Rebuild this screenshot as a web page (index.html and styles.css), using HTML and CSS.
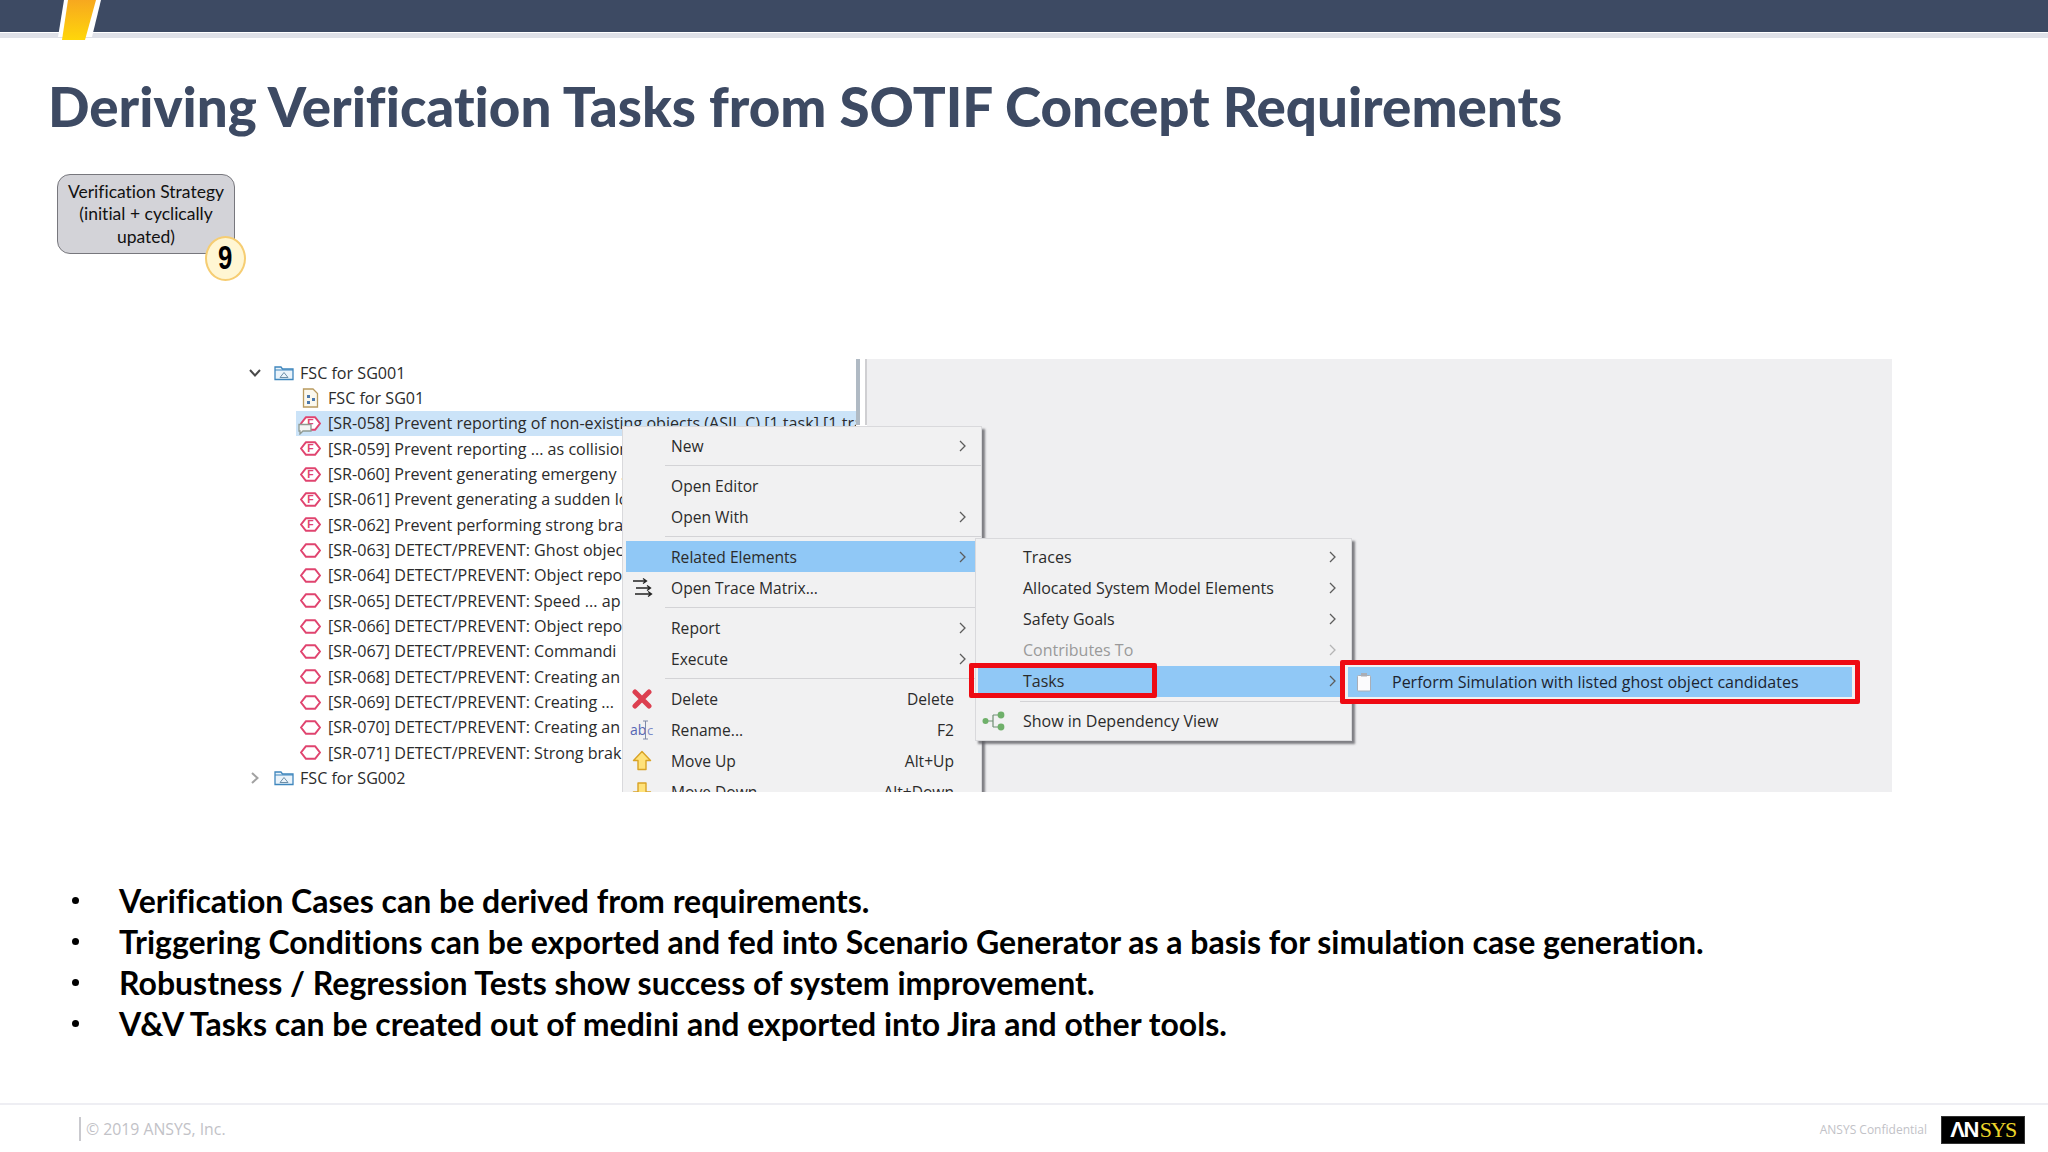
FILE: index.html
```html
<!DOCTYPE html>
<html lang="en">
<head>
<meta charset="utf-8">
<title>Deriving Verification Tasks from SOTIF Concept Requirements</title>
<link rel="stylesheet" href="styles.css">
</head>
<body>
<svg class="defs" width="0" height="0" aria-hidden="true">
  <symbol id="hex" viewBox="0 0 21 15"><path d="M1 7.5 6 1.2H15L20 7.5 15 13.8H6Z" fill="#fff" stroke="#e0446f" stroke-width="2" stroke-linejoin="round"/></symbol>
  <symbol id="hexf" viewBox="0 0 21 15"><path d="M1 7.5 6 1.2H15L20 7.5 15 13.8H6Z" fill="#fff" stroke="#e0446f" stroke-width="2" stroke-linejoin="round"/><text x="10.5" y="11.300" font-size="10.500" font-weight="700" text-anchor="middle" fill="#e0446f" font-family="Liberation Sans">F</text></symbol>
  <symbol id="folder" viewBox="0 0 20 16"><path d="M1 14.5V2H7L8.500 4H19V14.500Z" fill="#eaf3fa" stroke="#3f86bd" stroke-width="1.300"/><path d="M1 5H19" stroke="#3f86bd" stroke-width="1"/><path d="M6 12.500 10 7.500 14 12.500Z" fill="none" stroke="#6d8fa8" stroke-width="1"/></symbol>
  <symbol id="chev" viewBox="0 0 7 12"><path d="M1 1 6 6 1 11" fill="none" stroke="#5c5c5c" stroke-width="1.300"/></symbol>
  <symbol id="clip" viewBox="0 0 16 20"><rect x="1.500" y="3.500" width="13" height="15.500" rx="1" fill="#fbfbfd" stroke="#a9aeb7"/><rect x="5" y="1" width="6" height="3.500" fill="#a9adb5"/></symbol>
</svg>
<div class="slide">
  <header class="topbar">
    <svg class="stripe" width="110" height="42" viewBox="0 0 110 42"><path d="M64 0H101L92 37H58Z" fill="#fff"/><defs><linearGradient id="yel" x1="0" y1="0" x2="0" y2="1"><stop offset="0" stop-color="#f7a81f"/><stop offset="1" stop-color="#ffd60a"/></linearGradient></defs><path d="M68 0H96L85 40H62Z" fill="url(#yel)"/></svg>
  </header>
  <h1 class="title">Deriving Verification Tasks from SOTIF Concept Requirements</h1>
  <div class="callout">
    <span>Verification Strategy<br>(initial + cyclically<br>upated)</span>
    <b class="badge"><i>9</i></b>
  </div>
  <section class="shot">
    <div class="tree">
      <div class="row lvl0"><svg class="twist" width="14" height="10" viewBox="0 0 14 10"><path d="M2 2 7 7.500 12 2" fill="none" stroke="#4a4a4a" stroke-width="2"/></svg><svg class="ico-f" width="20" height="16"><use href="#folder"/></svg><span>FSC for SG001</span></div>
      <div class="row"><svg class="ico-r" width="17" height="20" viewBox="0 0 17 20"><path d="M1.500 1H11L15.500 5.500V19H1.500Z" fill="#fbf8ee" stroke="#b99a5f" stroke-width="1.300"/><rect x="5" y="7" width="3" height="3" fill="#4b78ad"/><rect x="10" y="10" width="3" height="3" fill="#4b78ad"/><rect x="5" y="13" width="3" height="3" fill="#4b78ad"/></svg><span>FSC for SG01</span></div>
      <div class="row sel"><svg class="ico-r" width="21" height="15"><use href="#hexf"/></svg><svg class="bubble" width="14" height="12" viewBox="0 0 14 12"><path d="M1 1.500H13V8H5L2 11V8H1Z" fill="#f4f4f4" stroke="#8f9a92" stroke-width="1.300"/></svg><span>[SR-058] Prevent reporting of non-existing objects (ASIL C) [1 task] [1 trace]</span></div>
      <div class="row"><svg class="ico-r" width="21" height="15"><use href="#hexf"/></svg><span>[SR-059] Prevent reporting ... as collision</span></div>
      <div class="row"><svg class="ico-r" width="21" height="15"><use href="#hexf"/></svg><span>[SR-060] Prevent generating emergeny ...</span></div>
      <div class="row"><svg class="ico-r" width="21" height="15"><use href="#hexf"/></svg><span>[SR-061] Prevent generating a sudden lo</span></div>
      <div class="row"><svg class="ico-r" width="21" height="15"><use href="#hexf"/></svg><span>[SR-062] Prevent performing strong brak</span></div>
      <div class="row"><svg class="ico-r" width="21" height="15"><use href="#hex"/></svg><span>[SR-063] DETECT/PREVENT: Ghost object</span></div>
      <div class="row"><svg class="ico-r" width="21" height="15"><use href="#hex"/></svg><span>[SR-064] DETECT/PREVENT: Object repo</span></div>
      <div class="row"><svg class="ico-r" width="21" height="15"><use href="#hex"/></svg><span>[SR-065] DETECT/PREVENT: Speed ... ap</span></div>
      <div class="row"><svg class="ico-r" width="21" height="15"><use href="#hex"/></svg><span>[SR-066] DETECT/PREVENT: Object repo</span></div>
      <div class="row"><svg class="ico-r" width="21" height="15"><use href="#hex"/></svg><span>[SR-067] DETECT/PREVENT: Commandi</span></div>
      <div class="row"><svg class="ico-r" width="21" height="15"><use href="#hex"/></svg><span>[SR-068] DETECT/PREVENT: Creating an</span></div>
      <div class="row"><svg class="ico-r" width="21" height="15"><use href="#hex"/></svg><span>[SR-069] DETECT/PREVENT: Creating ...</span></div>
      <div class="row"><svg class="ico-r" width="21" height="15"><use href="#hex"/></svg><span>[SR-070] DETECT/PREVENT: Creating an</span></div>
      <div class="row"><svg class="ico-r" width="21" height="15"><use href="#hex"/></svg><span>[SR-071] DETECT/PREVENT: Strong brak</span></div>
      <div class="row lvl0"><svg class="twist" width="14" height="14" viewBox="0 0 14 14"><path d="M4 2 9.500 7 4 12" fill="none" stroke="#a2a2a2" stroke-width="2"/></svg><svg class="ico-f" width="20" height="16"><use href="#folder"/></svg><span>FSC for SG002</span></div>
    </div>
    <div class="sash"></div>
    <div class="backdrop"></div>

    <div class="menu menu-main">
      <div class="item"><span class="cell"></span><span class="label">New</span><span class="arrow"><svg width="7" height="12"><use href="#chev"/></svg></span></div>
      <div class="sep"></div>
      <div class="item"><span class="cell"></span><span class="label">Open Editor</span><span class="arrow"></span></div>
      <div class="item"><span class="cell"></span><span class="label">Open With</span><span class="arrow"><svg width="7" height="12"><use href="#chev"/></svg></span></div>
      <div class="sep"></div>
      <div class="item hot"><span class="cell"></span><span class="label">Related Elements</span><span class="arrow"><svg width="7" height="12"><use href="#chev"/></svg></span></div>
      <div class="item"><span class="cell"><svg width="22" height="22" viewBox="0 0 22 22"><path d="M2 4H15M12 1.500 15.500 4 12 6.500M5 11H19M16 8.500 19.500 11 16 13.500M4 17H20M17 14.500 20.500 17 17 19.500" fill="none" stroke="#222" stroke-width="1.300"/></svg></span><span class="label">Open Trace Matrix...</span><span class="arrow"></span></div>
      <div class="sep"></div>
      <div class="item"><span class="cell"></span><span class="label">Report</span><span class="arrow"><svg width="7" height="12"><use href="#chev"/></svg></span></div>
      <div class="item"><span class="cell"></span><span class="label">Execute</span><span class="arrow"><svg width="7" height="12"><use href="#chev"/></svg></span></div>
      <div class="sep"></div>
      <div class="item"><span class="cell"><svg width="20" height="20" viewBox="0 0 20 20"><path d="M3 3 17 17M17 3 3 17" stroke="#dc3f50" stroke-width="5" stroke-linecap="round"/></svg></span><span class="label">Delete</span><span class="key">Delete</span><span class="arrow"></span></div>
      <div class="item"><span class="cell"><svg width="24" height="22" viewBox="0 0 24 22"><text x="0" y="16" font-size="14" fill="#5566b4" font-family="Open Sans">ab</text><text x="17" y="16" font-size="13" fill="#7d8cc8" font-family="Open Sans">c</text><path d="M13 2H18M15.500 2V20M13 20H18" fill="none" stroke="#7f8aa8" stroke-width="1"/></svg></span><span class="label">Rename...</span><span class="key">F2</span><span class="arrow"></span></div>
      <div class="item"><span class="cell"><svg width="20" height="21" viewBox="0 0 20 21"><path d="M10 1.500 18.500 10.500H14V19.500H6V10.500H1.500Z" fill="#ffe27a" stroke="#d9a326" stroke-width="1.400" stroke-linejoin="round"/></svg></span><span class="label">Move Up</span><span class="key">Alt+Up</span><span class="arrow"></span></div>
      <div class="item"><span class="cell"><svg width="20" height="21" viewBox="0 0 20 21"><path d="M6 2H14V11H18.500L10 20 1.500 11H6Z" fill="#ffe27a" stroke="#d9a326" stroke-width="1.400" stroke-linejoin="round"/></svg></span><span class="label">Move Down</span><span class="key">Alt+Down</span><span class="arrow"></span></div>
    </div>

    <div class="menu menu-sub">
      <div class="item"><span class="label">Traces</span><span class="arrow"><svg width="7" height="12"><use href="#chev"/></svg></span></div>
      <div class="item"><span class="label">Allocated System Model Elements</span><span class="arrow"><svg width="7" height="12"><use href="#chev"/></svg></span></div>
      <div class="item"><span class="label">Safety Goals</span><span class="arrow"><svg width="7" height="12"><use href="#chev"/></svg></span></div>
      <div class="item off"><span class="label">Contributes To</span><span class="arrow"><svg width="7" height="12" class="dim"><use href="#chev"/></svg></span></div>
      <div class="item hot"><span class="label">Tasks</span><span class="arrow"><svg width="7" height="12"><use href="#chev"/></svg></span></div>
      <div class="sep sep-sub"></div>
      <div class="item dep"><svg class="dep-ico" width="24" height="20" viewBox="0 0 24 20"><path d="M4 10H11M11 4V16M11 4H18M11 16H18" fill="none" stroke="#6f8f73" stroke-width="1.200"/><circle cx="3.500" cy="10" r="3" fill="#6fb06a"/><circle cx="19" cy="4" r="3.400" fill="#6fb06a"/><circle cx="19" cy="16" r="3.400" fill="#6fb06a"/></svg><span class="label">Show in Dependency View</span></div>
    </div>

    <div class="mark mark-tasks"></div>

    <div class="menu-task">
      <div class="task-row"><svg width="16" height="20"><use href="#clip"/></svg><span>Perform Simulation with listed ghost object candidates</span></div>
    </div>
  </section>

  <ul class="points">
    <li>Verification Cases can be derived from requirements.</li>
    <li>Triggering Conditions can be exported and fed into Scenario Generator as a basis for simulation case generation.</li>
    <li>Robustness / Regression Tests show success of system improvement.</li>
    <li>V&amp;V Tasks can be created out of medini and exported into Jira and other tools.</li>
  </ul>

  <footer class="foot">
    <span class="copy">© 2019 ANSYS, Inc.</span>
    <span class="conf">ANSYS Confidential</span>
    <span class="logo"><b>ΛN</b><em>SYS</em></span>
  </footer>
</div>
</body>
</html>
```
FILE: styles.css
```css
* { box-sizing: border-box; }
html, body { margin: 0; padding: 0; background: #fff; }
.defs { position: absolute; }
.slide {
  width: 2048px; height: 1152px; overflow: hidden; position: relative;
  display: flex; flex-direction: column; background: #fff;
  font-family: Lato, "Liberation Sans", sans-serif; font-variant-ligatures: none;
}
.topbar {
  height: 38px; flex: none; position: relative;
  background: #3d4a63; border-bottom: 5px solid #dfe1e8;
  box-shadow: inset 0 -1px 0 #fff;
}
.stripe { position: absolute; left: 0; top: 0; }
.title {
  margin: 38px 0 0 48px; font-size: 54.700px; line-height: 60px; font-weight: 900;
  color: #3d4a63; white-space: nowrap;
}
.callout {
  position: relative; flex: none; width: 178px; height: 80px; margin: 38px 0 0 57px; padding-top: 1px;
  background: #d3d3d8; border: 1.500px solid #77777d; border-radius: 13px;
  display: flex; align-items: center; justify-content: center; text-align: center;
  font-size: 17.500px; line-height: 22.500px; color: #111;
}
.badge {
  position: absolute; right: -12px; bottom: -28px; width: 41px; height: 45px;
  border-radius: 50%; background: #fff6d3; border: 2px solid #f6cd72;
  display: flex; align-items: center; justify-content: center;
  font-family: "Liberation Sans", sans-serif; font-size: 33px; font-weight: 700; color: #000;
}
.badge i { font-style: normal; display: block; transform: scaleX(.78); }
.shot {
  position: relative; flex: none; height: 433px; width: 1652px; margin: 105px 0 0 240px;
  overflow: hidden; display: flex; background: #fff;
}
.tree { width: 616px; flex: none; overflow: hidden; padding-top: 1px; font-family: "Open Sans", sans-serif; font-size: 16.100px; color: #2b2b2b; }
.row {
  height: 25.350px; display: flex; align-items: center; white-space: nowrap; position: relative;
  padding-left: 60px; width: 100%;
}
.row.lvl0 { padding-left: 8px; }
.row.sel { background: #cbe3f8; margin-left: 56px; padding-left: 4px; width: 560px; }
.row span { line-height: 1; }
.twist { margin-right: 12px; flex: none; }
.ico-f { margin-right: 6px; flex: none; }
.ico-r { margin-right: 7px; flex: none; }
.row:nth-child(2) .ico-r { margin-left: 2px; margin-right: 9px; }
.bubble { position: absolute; left: 2px; top: 12px; }
.sash { width: 11px; flex: none; background: #fff; border-left: 4px solid #b0bac4; border-right: 2px solid #cfcfd2; height: 66px; }
.backdrop { flex: 1; background: #efeff1; }
.menu {
  position: absolute; background: #f1f1f2; border: 1px solid #d9d9dc;
  font-family: "Open Sans", sans-serif; font-size: 16px; color: #2b2b2b;
  box-shadow: 3px 3px 2px rgba(90,90,95,.75);
}
.menu-main { left: 382px; top: 67px; width: 360px; height: 420px; padding: 3px 0 0 3px; font-size: 15.600px; }
.menu-sub { left: 735px; top: 179px; width: 377px; height: 203px; padding: 2.500px 2px 0 2px; }
.item { height: 31px; display: flex; align-items: center; white-space: nowrap; }
.cell { width: 45px; flex: none; display: flex; justify-content: center; padding-right: 14px; }
.label { flex: 1; }
.key { margin-right: 0; }
.arrow { width: 27px; flex: none; display: flex; padding-left: 5px; align-items: center; }
.hot { background: #90c8f6; }
.off { color: #9a9a9a; }
.dim { opacity: .4; }
.sep { height: 9px; margin-left: 39px; display: flex; align-items: center; }
.sep::before { content: ""; flex: 1; height: 1px; background: #d3d3d6; }
.menu-sub .item { padding-left: 45px; }
.menu-sub .arrow { width: 20px; padding-left: 0; }
.sep-sub { margin-left: 42px; }
.dep { position: relative; }
.dep-ico { position: absolute; left: 4px; top: 5px; }
.mark {
  position: absolute; border: 5px solid #ee0a13; border-radius: 2px;
}
.mark-tasks { left: 729px; top: 304px; width: 188px; height: 35px; }
.menu-task {
  position: absolute; left: 1100px; top: 301px; width: 520px; height: 44px;
  border: 5px solid #ee0a13; border-radius: 2px; background: #f1f1f2; padding: 2px 3px;
  font-family: "Open Sans", sans-serif; font-size: 16px; color: #1c2430;
}
.task-row {
  height: 30px; background: #90c8f6; display: flex; align-items: center; padding-left: 8px; white-space: nowrap;
}
.task-row svg { margin-right: 20px; flex: none; }
.points {
  list-style: none; margin: 88px 0 0; padding: 0 0 0 119px;
  font-size: 32px; line-height: 41px; font-weight: 700; color: #000;
}
.points li { position: relative; white-space: nowrap; }
.points li::before {
  content: ""; position: absolute; left: -47px; top: 17px; width: 7px; height: 7px; border-radius: 50%; background: #000;
}
.foot {
  margin-top: auto; height: 49px; border-top: 2px solid #eeeef3; display: flex; align-items: center;
  padding: 0 23px 0 79px; font-family: "Open Sans", sans-serif; color: #c2c2c7;
}
.copy { border-left: 2px solid #c9c9ce; padding-left: 5px; font-size: 15.800px; line-height: 24px; margin-right: auto; margin-top: 0; }
.conf { font-size: 12px; margin-right: 14px; margin-top: 1px; }
.logo {
  width: 84px; height: 28px; background: #000; border: 1px solid #333; display: flex; align-items: center; justify-content: center;
  font-size: 22px; line-height: 1; margin-top: 2px;
}
.logo b { font-family: "Liberation Sans", sans-serif; color: #fff; letter-spacing: -1.500px; margin-right: 2px; font-weight: 700; }
.logo em { font-family: "Liberation Serif", serif; font-style: normal; color: #ecd52a; letter-spacing: -1.500px; }
```
